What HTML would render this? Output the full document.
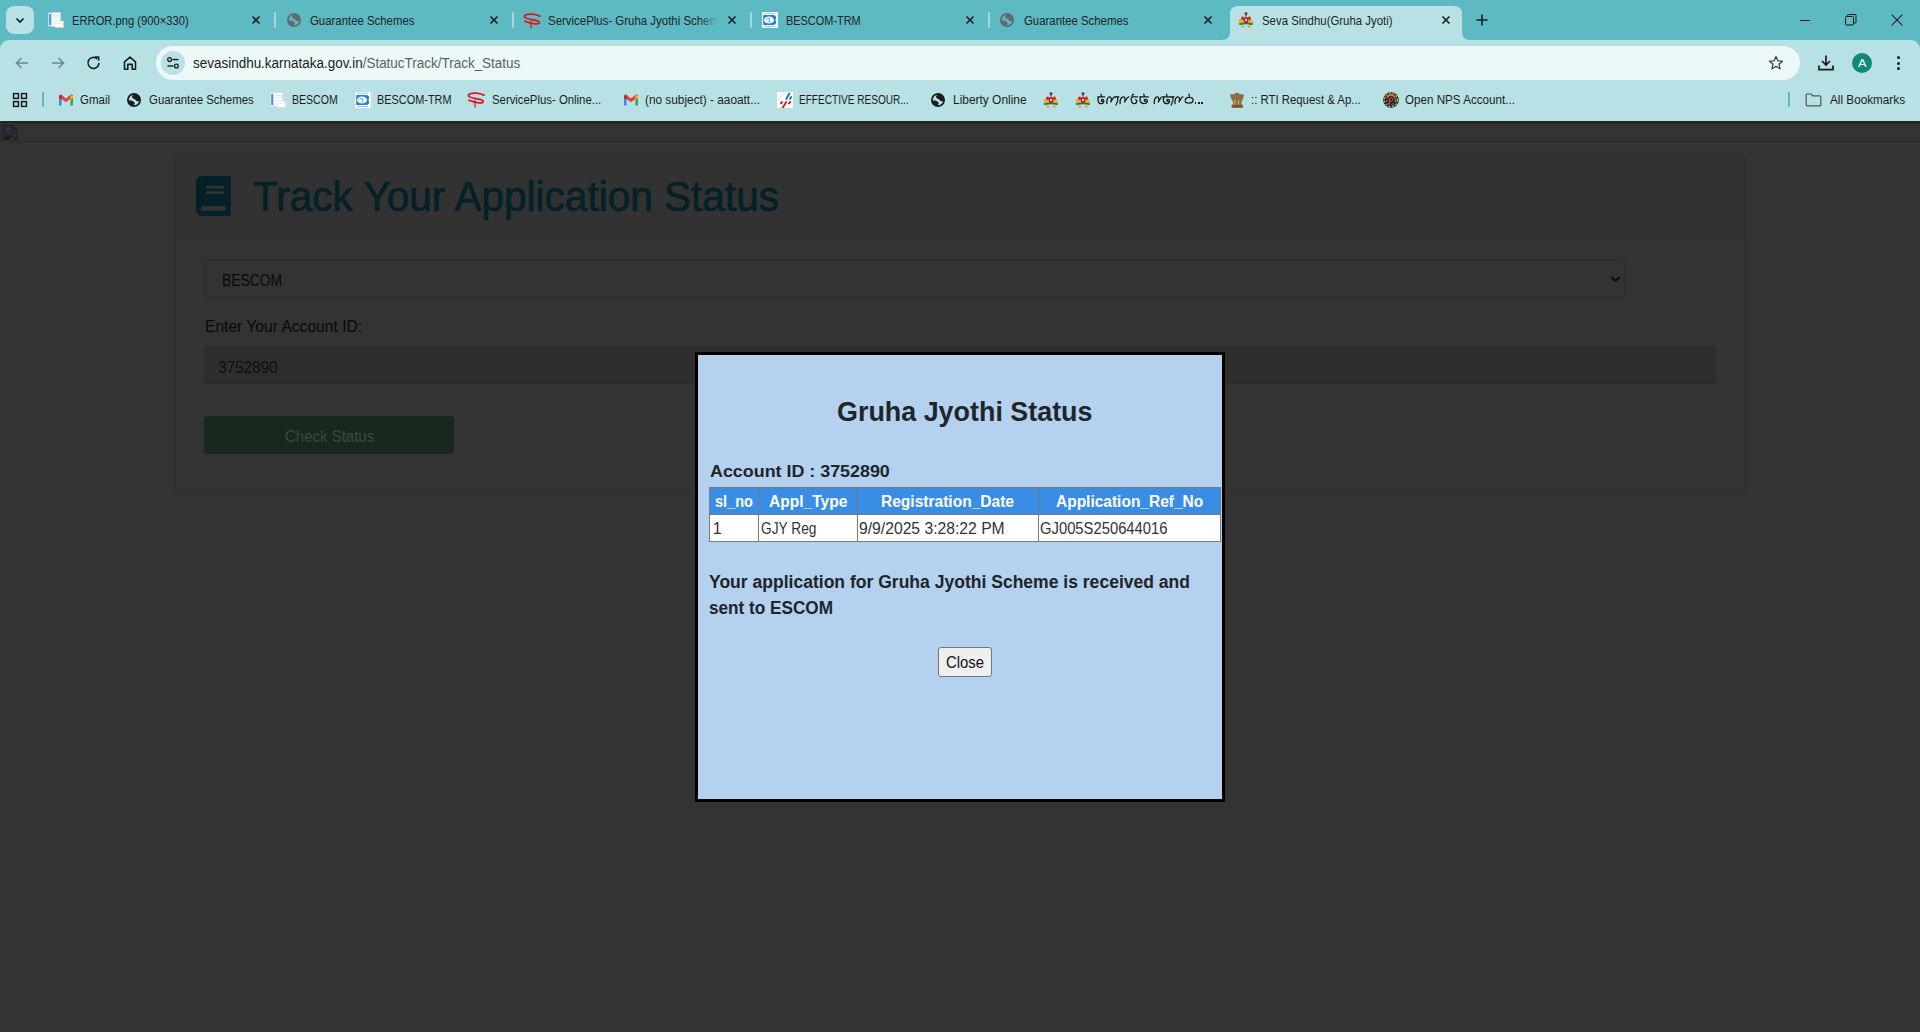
<!DOCTYPE html>
<html><head><meta charset="utf-8"><title>Seva Sindhu(Gruha Jyoti)</title><style>*{box-sizing:border-box;margin:0;padding:0}
html,body{width:1920px;height:1032px;overflow:hidden;background:#333333;font-family:"Liberation Sans",sans-serif}
.abs{position:absolute;display:block}
.t{position:absolute;white-space:nowrap}
</style></head><body>
<div class="abs" style="left:0;top:0;width:1920px;height:60px;background:#5db9c2"></div>
<div class="abs" style="left:6px;top:6px;width:28px;height:28px;border-radius:8px;background:#b8e1e5"></div>
<svg class="abs" style="left:14px;top:14px" width="12" height="12" viewBox="0 0 12 12"><path d="M2.5 4.5 L6 8 L9.5 4.5" fill="none" stroke="#1b1b1b" stroke-width="1.6"/></svg>
<svg class="abs" style="left:1222px;top:6px" width="248" height="35" viewBox="0 0 248 35"><path d="M0 34 Q8 34 8 26 L8 8 Q8 0 16 0 L232 0 Q240 0 240 8 L240 26 Q240 34 248 34 L248 35 L0 35 Z" fill="#b8e1e5"/></svg>
<div class="abs" style="left:0;top:0;width:1920px;height:60px;background:#5db9c2"></div>
<div class="abs" style="left:6px;top:6px;width:28px;height:28px;border-radius:8px;background:#b8e1e5"></div>
<svg class="abs" style="left:14px;top:14px" width="12" height="12" viewBox="0 0 12 12"><path d="M2.5 4.5 L6 8 L9.5 4.5" fill="none" stroke="#1b1b1b" stroke-width="1.6"/></svg>
<svg class="abs" style="left:1222px;top:6px" width="248" height="35" viewBox="0 0 248 35"><path d="M0 34 Q8 34 8 26 L8 8 Q8 0 16 0 L232 0 Q240 0 240 8 L240 26 Q240 34 248 34 L248 35 L0 35 Z" fill="#b8e1e5"/></svg>
<svg class="abs" style="left:48px;top:12px" width="16" height="16" viewBox="0 0 16 16"><rect x="0.5" y="1" width="9" height="13" fill="#f4f7fa" stroke="#d7dde3" stroke-width="0.6"/><rect x="1.2" y="2" width="2" height="11" fill="#4a90d9"/><rect x="4" y="0.5" width="8.5" height="14" fill="#fbfcfd" stroke="#d0d6dc" stroke-width="0.6"/><rect x="5" y="3" width="6" height="1" fill="#dfe4ea"/><rect x="5" y="5" width="6" height="1" fill="#dfe4ea"/><rect x="7" y="9" width="8.5" height="6.5" fill="#ffffff" stroke="#cfd5db" stroke-width="0.6"/><rect x="8.5" y="11" width="5" height="1" fill="#e3e7ec"/></svg>
<svg class="abs" style="left:249px;top:13px" width="14" height="14" viewBox="0 0 14 14"><path d="M3.5 3.5 L10.5 10.5 M10.5 3.5 L3.5 10.5" stroke="#1d1d1d" stroke-width="1.6" fill="none"/></svg>
<svg class="abs" style="left:286px;top:12px" width="16" height="16" viewBox="0 0 16 16"><defs><clipPath id="gc286_12"><circle cx="8" cy="8" r="5.2"/></clipPath></defs><circle cx="8" cy="8" r="7" fill="#5f6b6d"/><g clip-path="url(#gc286_12)"><path fill="#5db9c2" d="M0 0 L7.5 0 L7.5 3 C6 3.5 5.6 5.2 6.6 6 C7.6 6.8 9 7 9.8 8.2 C10.6 9.4 12 9.4 16 9 L16 16 L7.6 16 L7.6 13 C8.8 12.6 9 11 8.2 10.2 C7.4 9.4 6 8.8 5 8.6 C4 8.4 2 8.6 0 8.6 Z"/></g></svg>
<svg class="abs" style="left:487px;top:13px" width="14" height="14" viewBox="0 0 14 14"><path d="M3.5 3.5 L10.5 10.5 M10.5 3.5 L3.5 10.5" stroke="#1d1d1d" stroke-width="1.6" fill="none"/></svg>
<svg class="abs" style="left:523px;top:12.5px" width="18" height="16" viewBox="0 0 18 16"><path d="M17 3.2 C13 0.8 4 0.2 1.8 2.6 C0.4 4.4 3.5 5.6 7.5 6.4 C12.5 7.2 16.3 7.8 16.3 9.6 C16.3 11.6 10 11.6 2 8.2" fill="none" stroke="#e3121a" stroke-width="1.7" stroke-linecap="round"/><path d="M8 8 L8 15.5" stroke="#e3121a" stroke-width="1.2"/></svg>
<svg class="abs" style="left:725px;top:13px" width="14" height="14" viewBox="0 0 14 14"><path d="M3.5 3.5 L10.5 10.5 M10.5 3.5 L3.5 10.5" stroke="#1d1d1d" stroke-width="1.6" fill="none"/></svg>
<svg class="abs" style="left:762px;top:12px" width="16" height="16" viewBox="0 0 16 16"><rect x="0" y="0" width="16" height="16" fill="#ffffff"/><path d="M1.2 3 L11 3 C14.5 3 15 6.5 13.2 8 C15.2 9.5 14.5 13 11 13 L1.2 13 Z" fill="#1a84d6"/><ellipse cx="7" cy="8" rx="5" ry="3.6" fill="#ffffff"/><path d="M3.5 8 C5 6.2 7 6.2 8 7 M7.4 7 L7.4 11" stroke="#5aa8e0" stroke-width="1" fill="none"/><rect x="2" y="0.8" width="11" height="1" fill="#9cc8ee"/><rect x="2" y="14" width="11" height="1" fill="#9cc8ee"/></svg>
<svg class="abs" style="left:963px;top:13px" width="14" height="14" viewBox="0 0 14 14"><path d="M3.5 3.5 L10.5 10.5 M10.5 3.5 L3.5 10.5" stroke="#1d1d1d" stroke-width="1.6" fill="none"/></svg>
<svg class="abs" style="left:999px;top:12px" width="16" height="16" viewBox="0 0 16 16"><defs><clipPath id="gc999_12"><circle cx="8" cy="8" r="5.2"/></clipPath></defs><circle cx="8" cy="8" r="7" fill="#5f6b6d"/><g clip-path="url(#gc999_12)"><path fill="#5db9c2" d="M0 0 L7.5 0 L7.5 3 C6 3.5 5.6 5.2 6.6 6 C7.6 6.8 9 7 9.8 8.2 C10.6 9.4 12 9.4 16 9 L16 16 L7.6 16 L7.6 13 C8.8 12.6 9 11 8.2 10.2 C7.4 9.4 6 8.8 5 8.6 C4 8.4 2 8.6 0 8.6 Z"/></g></svg>
<svg class="abs" style="left:1201px;top:13px" width="14" height="14" viewBox="0 0 14 14"><path d="M3.5 3.5 L10.5 10.5 M10.5 3.5 L3.5 10.5" stroke="#1d1d1d" stroke-width="1.6" fill="none"/></svg>
<svg class="abs" style="left:1238px;top:12px" width="16" height="16" viewBox="0 0 16 16"><path d="M5.6 4 C3.6 5 2 7.6 0.8 10.6 C1.6 12 3.6 12.6 5.6 12.2 Z" fill="#ecb21e"/><path d="M10.4 4 C12.4 5 14 7.6 15.2 10.6 C14.4 12 12.4 12.6 10.4 12.2 Z" fill="#ecb21e"/><path d="M1.4 9.5 C1 8.5 1.4 7.5 2.2 7.2" stroke="#d8a020" stroke-width="0.8" fill="none"/><ellipse cx="4.6" cy="6.2" rx="1.3" ry="1.7" fill="#d40f1a"/><ellipse cx="11.4" cy="6.2" rx="1.3" ry="1.7" fill="#d40f1a"/><circle cx="8" cy="1.6" r="1.4" fill="#9a1024"/><rect x="6.9" y="3" width="2.2" height="1.6" fill="#3a8ad0"/><ellipse cx="8" cy="8.3" rx="2.4" ry="3.4" fill="#c3172e"/><ellipse cx="8" cy="8" rx="1.1" ry="1.3" fill="#ecdadf"/><path d="M0.6 11.6 Q8 9.6 15.4 11.6 L14.2 13.2 Q8 11.4 1.8 13.2 Z" fill="#2a7458"/><path d="M4 13.4 L6.4 13.4 L6 15.6 L3.2 15.6 Z M9.6 13.4 L12 13.4 L12.8 15.6 L10 15.6 Z" fill="#e6a628"/></svg>
<svg class="abs" style="left:1439px;top:13px" width="14" height="14" viewBox="0 0 14 14"><path d="M3.5 3.5 L10.5 10.5 M10.5 3.5 L3.5 10.5" stroke="#1d1d1d" stroke-width="1.6" fill="none"/></svg>
<div class="abs" style="left:274px;top:12px;width:2px;height:16px;background:#a6d8dd;border-radius:1px"></div>
<div class="abs" style="left:512px;top:12px;width:2px;height:16px;background:#a6d8dd;border-radius:1px"></div>
<div class="abs" style="left:750px;top:12px;width:2px;height:16px;background:#a6d8dd;border-radius:1px"></div>
<div class="abs" style="left:988px;top:12px;width:2px;height:16px;background:#a6d8dd;border-radius:1px"></div>
<div class="abs" style="left:700px;top:8px;width:24px;height:24px;background:linear-gradient(to right, rgba(93,185,194,0), #5db9c2 70%);z-index:5"></div>
<svg class="abs" style="left:1475px;top:13px" width="14" height="14" viewBox="0 0 14 14"><path d="M7 1.5 L7 12.5 M1.5 7 L12.5 7" stroke="#1b1b1b" stroke-width="1.6"/></svg>
<div class="abs" style="left:1800px;top:20px;width:10px;height:1px;background:#1b1b1b"></div>
<svg class="abs" style="left:1845px;top:14px" width="12" height="12" viewBox="0 0 12 12"><rect x="0.5" y="2.5" width="8" height="8.5" rx="1" fill="none" stroke="#1b1b1b" stroke-width="1"/><path d="M2.5 2.5 L2.5 1.5 Q2.5 0.5 3.5 0.5 L10 0.5 Q11 0.5 11 1.5 L11 8.5 Q11 9 10.5 9 L9 9" fill="none" stroke="#1b1b1b" stroke-width="1"/></svg>
<svg class="abs" style="left:1891px;top:14px" width="12" height="12" viewBox="0 0 12 12"><path d="M0.7 0.7 L11.3 11.3 M11.3 0.7 L0.7 11.3" stroke="#1b1b1b" stroke-width="1.1"/></svg>
<div class="abs" style="left:0;top:40px;width:1920px;height:81px;background:#b8e1e5;border-top-left-radius:9px;border-top-right-radius:9px"></div>
<svg class="abs" style="left:14px;top:55px" width="16" height="16" viewBox="0 0 16 16"><path d="M14 8 L2.5 8 M7.5 3 L2.5 8 L7.5 13" fill="none" stroke="#6f8486" stroke-width="1.5"/></svg>
<svg class="abs" style="left:50px;top:55px" width="16" height="16" viewBox="0 0 16 16"><path d="M2 8 L13.5 8 M8.5 3 L13.5 8 L8.5 13" fill="none" stroke="#6f8486" stroke-width="1.5"/></svg>
<svg class="abs" style="left:86px;top:55px" width="16" height="16" viewBox="0 0 16 16"><path d="M13 8 A5.5 5.5 0 1 1 11.2 3.8" fill="none" stroke="#1b1b1b" stroke-width="1.6"/><path d="M8.8 2 L12.6 2 L12.6 5.8" fill="none" stroke="#1b1b1b" stroke-width="1.6"/></svg>
<svg class="abs" style="left:122px;top:55px" width="16" height="16" viewBox="0 0 16 16"><path d="M2.5 14.2 L2.5 6.8 L8 2.2 L13.5 6.8 L13.5 14.2 L10.2 14.2 L10.2 9.4 L5.8 9.4 L5.8 14.2 Z" fill="none" stroke="#1b1b1b" stroke-width="1.6" stroke-linejoin="round"/></svg>
<div class="abs" style="left:156px;top:46px;width:1644px;height:34px;border-radius:17px;background:#edf8f8"></div>
<div class="abs" style="left:161px;top:51px;width:24px;height:24px;border-radius:12px;background:#b8e1e5"></div>
<svg class="abs" style="left:165px;top:55px" width="16" height="16" viewBox="0 0 16 16"><circle cx="4.6" cy="4.6" r="1.9" fill="none" stroke="#1b1b1b" stroke-width="1.3"/><path d="M7.6 4.6 L13.5 4.6" stroke="#1b1b1b" stroke-width="1.4"/><circle cx="11.4" cy="11" r="1.9" fill="none" stroke="#1b1b1b" stroke-width="1.3"/><path d="M2.5 11 L8.4 11" stroke="#1b1b1b" stroke-width="1.4"/></svg>
<svg class="abs" style="left:1768px;top:55px" width="16" height="16" viewBox="0 0 16 16"><path d="M8 1.5 L9.9 5.8 L14.5 6.2 L11 9.2 L12.1 13.8 L8 11.4 L3.9 13.8 L5 9.2 L1.5 6.2 L6.1 5.8 Z" fill="none" stroke="#444" stroke-width="1.3" stroke-linejoin="round"/></svg>
<svg class="abs" style="left:1818px;top:55px" width="16" height="16" viewBox="0 0 16 16"><path d="M8 0.5 L8 10 M4 6 L8 10 L12 6" fill="none" stroke="#1b1b1b" stroke-width="1.7"/><path d="M1 10.5 L1 14.6 L15 14.6 L15 10.5" fill="none" stroke="#1b1b1b" stroke-width="1.7"/></svg>
<div class="abs" style="left:1852px;top:53px;width:20px;height:20px;border-radius:10px;background:#0f8a7a"></div>
<div class="abs" style="left:1896.5px;top:55.8px;width:3px;height:3px;border-radius:2px;background:#1b1b1b"></div>
<div class="abs" style="left:1896.5px;top:61.5px;width:3px;height:3px;border-radius:2px;background:#1b1b1b"></div>
<div class="abs" style="left:1896.5px;top:67.2px;width:3px;height:3px;border-radius:2px;background:#1b1b1b"></div>
<svg class="abs" style="left:12px;top:92px" width="16" height="16" viewBox="0 0 16 16"><rect x="1.6" y="1.6" width="4.8" height="4.8" fill="none" stroke="#1b1b1b" stroke-width="1.5"/><rect x="9.6" y="1.6" width="4.8" height="4.8" fill="none" stroke="#1b1b1b" stroke-width="1.5"/><rect x="1.6" y="9.6" width="4.8" height="4.8" fill="none" stroke="#1b1b1b" stroke-width="1.5"/><rect x="9.6" y="9.6" width="4.8" height="4.8" fill="none" stroke="#1b1b1b" stroke-width="1.5"/></svg>
<div class="abs" style="left:42px;top:92px;width:2px;height:15px;background:#5db9c2;border-radius:1px"></div>
<div class="abs" style="left:1788px;top:92px;width:2px;height:15px;background:#5db9c2;border-radius:1px"></div>
<svg class="abs" style="left:58px;top:92px" width="16" height="16" viewBox="0 0 16 16"><path d="M1 4 L1 13.5 L3.6 13.5 L3.6 6.6 Z" fill="#4285f4"/><path d="M15 4 L15 13.5 L12.4 13.5 L12.4 6.6 Z" fill="#34a853"/><path d="M1 4 C1 2.6 2.4 2 3.4 2.8 L8 6.4 L12.6 2.8 C13.6 2 15 2.6 15 4 L15 5 L8 10.2 L1 5 Z" fill="#ea4335"/><path d="M12.4 3.2 L15 4 L15 6 L12.4 7.6 Z" fill="#fbbc04"/><path d="M1 4 L3.6 3.2 L3.6 7.6 L1 6 Z" fill="#c5221f"/></svg>
<svg class="abs" style="left:126px;top:92px" width="16" height="16" viewBox="0 0 16 16"><defs><clipPath id="gc126_92"><circle cx="8" cy="8" r="5.2"/></clipPath></defs><circle cx="8" cy="8" r="7" fill="#1b1b1b"/><g clip-path="url(#gc126_92)"><path fill="#b8e1e5" d="M0 0 L7.5 0 L7.5 3 C6 3.5 5.6 5.2 6.6 6 C7.6 6.8 9 7 9.8 8.2 C10.6 9.4 12 9.4 16 9 L16 16 L7.6 16 L7.6 13 C8.8 12.6 9 11 8.2 10.2 C7.4 9.4 6 8.8 5 8.6 C4 8.4 2 8.6 0 8.6 Z"/></g></svg>
<svg class="abs" style="left:270px;top:92px" width="16" height="16" viewBox="0 0 16 16"><rect x="0.5" y="1" width="9" height="13" fill="#f4f7fa" stroke="#d7dde3" stroke-width="0.6"/><rect x="1.2" y="2" width="2" height="11" fill="#4a90d9"/><rect x="4" y="0.5" width="8.5" height="14" fill="#fbfcfd" stroke="#d0d6dc" stroke-width="0.6"/><rect x="5" y="3" width="6" height="1" fill="#dfe4ea"/><rect x="5" y="5" width="6" height="1" fill="#dfe4ea"/><rect x="7" y="9" width="8.5" height="6.5" fill="#ffffff" stroke="#cfd5db" stroke-width="0.6"/><rect x="8.5" y="11" width="5" height="1" fill="#e3e7ec"/></svg>
<svg class="abs" style="left:355px;top:92px" width="16" height="16" viewBox="0 0 16 16"><rect x="0" y="0" width="16" height="16" fill="#ffffff"/><path d="M1.2 3 L11 3 C14.5 3 15 6.5 13.2 8 C15.2 9.5 14.5 13 11 13 L1.2 13 Z" fill="#1a84d6"/><ellipse cx="7" cy="8" rx="5" ry="3.6" fill="#ffffff"/><path d="M3.5 8 C5 6.2 7 6.2 8 7 M7.4 7 L7.4 11" stroke="#5aa8e0" stroke-width="1" fill="none"/><rect x="2" y="0.8" width="11" height="1" fill="#9cc8ee"/><rect x="2" y="14" width="11" height="1" fill="#9cc8ee"/></svg>
<svg class="abs" style="left:467px;top:92px" width="18" height="16" viewBox="0 0 18 16"><path d="M17 3.2 C13 0.8 4 0.2 1.8 2.6 C0.4 4.4 3.5 5.6 7.5 6.4 C12.5 7.2 16.3 7.8 16.3 9.6 C16.3 11.6 10 11.6 2 8.2" fill="none" stroke="#e3121a" stroke-width="1.7" stroke-linecap="round"/><path d="M8 8 L8 15.5" stroke="#e3121a" stroke-width="1.2"/></svg>
<svg class="abs" style="left:623px;top:92px" width="16" height="16" viewBox="0 0 16 16"><path d="M1 4 L1 13.5 L3.6 13.5 L3.6 6.6 Z" fill="#4285f4"/><path d="M15 4 L15 13.5 L12.4 13.5 L12.4 6.6 Z" fill="#34a853"/><path d="M1 4 C1 2.6 2.4 2 3.4 2.8 L8 6.4 L12.6 2.8 C13.6 2 15 2.6 15 4 L15 5 L8 10.2 L1 5 Z" fill="#ea4335"/><path d="M12.4 3.2 L15 4 L15 6 L12.4 7.6 Z" fill="#fbbc04"/><path d="M1 4 L3.6 3.2 L3.6 7.6 L1 6 Z" fill="#c5221f"/></svg>
<svg class="abs" style="left:777px;top:92px" width="16" height="16" viewBox="0 0 16 16"><rect x="0" y="0" width="16" height="16" fill="#ffffff"/><path d="M1.5 9 C2 4 5 1.6 9 1.4" fill="none" stroke="#d8d8d8" stroke-width="0.9"/><path d="M12.6 0.8 L9 7.6 M14.6 4.4 L12.6 7.6" stroke="#0f60b8" stroke-width="1.7"/><path d="M5.4 9.4 L3.6 12 M9.6 9.4 L5.6 16 M13.6 9.4 L11.6 12" stroke="#e01010" stroke-width="1.8"/></svg>
<svg class="abs" style="left:930px;top:92px" width="16" height="16" viewBox="0 0 16 16"><defs><clipPath id="gc930_92"><circle cx="8" cy="8" r="5.2"/></clipPath></defs><circle cx="8" cy="8" r="7" fill="#1b1b1b"/><g clip-path="url(#gc930_92)"><path fill="#b8e1e5" d="M0 0 L7.5 0 L7.5 3 C6 3.5 5.6 5.2 6.6 6 C7.6 6.8 9 7 9.8 8.2 C10.6 9.4 12 9.4 16 9 L16 16 L7.6 16 L7.6 13 C8.8 12.6 9 11 8.2 10.2 C7.4 9.4 6 8.8 5 8.6 C4 8.4 2 8.6 0 8.6 Z"/></g></svg>
<svg class="abs" style="left:1043px;top:92px" width="16" height="16" viewBox="0 0 16 16"><path d="M5.6 4 C3.6 5 2 7.6 0.8 10.6 C1.6 12 3.6 12.6 5.6 12.2 Z" fill="#ecb21e"/><path d="M10.4 4 C12.4 5 14 7.6 15.2 10.6 C14.4 12 12.4 12.6 10.4 12.2 Z" fill="#ecb21e"/><path d="M1.4 9.5 C1 8.5 1.4 7.5 2.2 7.2" stroke="#d8a020" stroke-width="0.8" fill="none"/><ellipse cx="4.6" cy="6.2" rx="1.3" ry="1.7" fill="#d40f1a"/><ellipse cx="11.4" cy="6.2" rx="1.3" ry="1.7" fill="#d40f1a"/><circle cx="8" cy="1.6" r="1.4" fill="#9a1024"/><rect x="6.9" y="3" width="2.2" height="1.6" fill="#3a8ad0"/><ellipse cx="8" cy="8.3" rx="2.4" ry="3.4" fill="#c3172e"/><ellipse cx="8" cy="8" rx="1.1" ry="1.3" fill="#ecdadf"/><path d="M0.6 11.6 Q8 9.6 15.4 11.6 L14.2 13.2 Q8 11.4 1.8 13.2 Z" fill="#2a7458"/><path d="M4 13.4 L6.4 13.4 L6 15.6 L3.2 15.6 Z M9.6 13.4 L12 13.4 L12.8 15.6 L10 15.6 Z" fill="#e6a628"/></svg>
<svg class="abs" style="left:1075px;top:92px" width="16" height="16" viewBox="0 0 16 16"><path d="M5.6 4 C3.6 5 2 7.6 0.8 10.6 C1.6 12 3.6 12.6 5.6 12.2 Z" fill="#ecb21e"/><path d="M10.4 4 C12.4 5 14 7.6 15.2 10.6 C14.4 12 12.4 12.6 10.4 12.2 Z" fill="#ecb21e"/><path d="M1.4 9.5 C1 8.5 1.4 7.5 2.2 7.2" stroke="#d8a020" stroke-width="0.8" fill="none"/><ellipse cx="4.6" cy="6.2" rx="1.3" ry="1.7" fill="#d40f1a"/><ellipse cx="11.4" cy="6.2" rx="1.3" ry="1.7" fill="#d40f1a"/><circle cx="8" cy="1.6" r="1.4" fill="#9a1024"/><rect x="6.9" y="3" width="2.2" height="1.6" fill="#3a8ad0"/><ellipse cx="8" cy="8.3" rx="2.4" ry="3.4" fill="#c3172e"/><ellipse cx="8" cy="8" rx="1.1" ry="1.3" fill="#ecdadf"/><path d="M0.6 11.6 Q8 9.6 15.4 11.6 L14.2 13.2 Q8 11.4 1.8 13.2 Z" fill="#2a7458"/><path d="M4 13.4 L6.4 13.4 L6 15.6 L3.2 15.6 Z M9.6 13.4 L12 13.4 L12.8 15.6 L10 15.6 Z" fill="#e6a628"/></svg>
<svg class="abs" style="left:1096px;top:92px" width="100" height="16" viewBox="0 0 100 16" fill="none" stroke="#1c1c1c" stroke-width="1.3" stroke-linecap="round"><path d="M1.7625 4.8 L8.7 4.8 M4.95 2.2 L5.5125 4.8 M2.7 4.8 C1.3875 7 1.7625 11.6 4.95 11.6 C8.325 11.6 8.7 7.6 6.2625 7.4 C4.95 7.4 4.95 9.4 6.45 9.4"/><path d="M10.866666666666667 11.6 C10.3 8 11.811111111111112 4.8 13.700000000000001 4.8 C15.588888888888889 4.8 15.777777777777779 8 14.644444444444446 10.4 C16.344444444444445 7.4 17.28888888888889 4.8 18.8 4.8"/><path d="M18.8 5.4 C19.8 4.6 21.2 4.6 22.8 4.8 M21.8 4.8 C22.2 8 21.2 11 20.0 13"/><path d="M24.133333333333333 11.6 C23.5 8 25.18888888888889 4.8 27.3 4.8 C29.41111111111111 4.8 29.62222222222222 8 28.355555555555554 10.4 C30.255555555555556 7.4 31.31111111111111 4.8 33.0 4.8"/><path d="M37.73076923076923 2.4 C35.57692307692308 2.6 35.57692307692308 4.8 37.73076923076923 4.8 L41.5 4.8 M36.00769230769231 4.8 C34.5 7.4 35.146153846153844 11.6 38.16153846153846 11.6 C41.176923076923075 11.6 41.607692307692304 8 39.45384615384615 7.6"/><path d="M43.7125 4.8 L52.5 4.8 M47.75 2.2 L48.4625 4.8 M44.9 4.8 C43.2375 7 43.7125 11.6 47.75 11.6 C52.025 11.6 52.5 7.6 49.4125 7.4 C47.75 7.4 47.75 9.4 49.65 9.4"/><path d="M58.36666666666667 11.6 C57.8 8 59.31111111111111 4.8 61.199999999999996 4.8 C63.08888888888889 4.8 63.27777777777777 8 62.14444444444444 10.4 C63.84444444444444 7.4 64.78888888888889 4.8 66.3 4.8"/><path d="M67.1 4.8 L74.5 4.8 M70.5 2.2 L71.1 4.8 M68.1 4.8 C66.7 7 67.1 11.6 70.5 11.6 C74.1 11.6 74.5 7.6 71.9 7.4 C70.5 7.4 70.5 9.4 72.1 9.4"/><path d="M74.5 5.4 C75.5 4.6 76.9 4.6 78.0 4.8 M77.0 4.8 C77.4 8 76.4 11 75.2 13"/><path d="M79.06666666666666 11.6 C78.5 8 80.0111111111111 4.8 81.9 4.8 C83.78888888888889 4.8 83.97777777777777 8 82.84444444444445 10.4 C84.54444444444445 7.4 85.4888888888889 4.8 87.0 4.8"/><path d="M92.94666666666667 2.2 L93.36 4.8 M89.22666666666667 8 C89.22666666666667 4.6 97.08000000000001 4.6 97.08000000000001 8.2 C97.08000000000001 11.8 89.22666666666667 11.8 89.22666666666667 9.2"/></svg><div class="abs" style="left:1194.6px;top:102.4px;width:1.8px;height:1.8px;background:#1c1c1c"></div><div class="abs" style="left:1197.8px;top:102.4px;width:1.8px;height:1.8px;background:#1c1c1c"></div><div class="abs" style="left:1201px;top:102.4px;width:1.8px;height:1.8px;background:#1c1c1c"></div>
<svg class="abs" style="left:1229px;top:92px" width="16" height="16" viewBox="0 0 16 16"><path d="M1 3.5 C2 1.5 4 2 5 2.5 C6 0 10 0 11 2.5 C12 2 14 1.5 15 3.5 L13.5 8 L12.5 10 L12.5 12.5 L14 13 L14 16 L2.5 16 L2.5 13 L4 12.5 L4 10 L3 8 Z" fill="#8f6b40"/><path d="M6 8 L6 12.5 M9.5 8 L9.5 12.5" stroke="#d9c29a" stroke-width="0.9"/><path d="M3 14 L13 14" stroke="#5e4324" stroke-width="1"/></svg>
<svg class="abs" style="left:1383px;top:92px" width="16" height="16" viewBox="0 0 16 16"><circle cx="8" cy="8" r="7.8" fill="#1a1a1a"/><circle cx="8" cy="8" r="6.6" fill="none" stroke="#e8c21a" stroke-width="1.2" stroke-dasharray="2 1.6"/><circle cx="8" cy="8" r="6.6" fill="none" stroke="#7a3aa8" stroke-width="1.2" stroke-dasharray="1.2 2.4" stroke-dashoffset="1"/><circle cx="8" cy="8" r="4.4" fill="none" stroke="#2a8ad8" stroke-width="1.4" stroke-dasharray="2.6 1.2"/><path d="M4 5.5 A4.4 4.4 0 0 1 12 5.5" fill="none" stroke="#f08020" stroke-width="1.4"/><path d="M12.4 6 A4.4 4.4 0 0 1 12.4 10" fill="none" stroke="#40a830" stroke-width="1.4"/><circle cx="8" cy="7.6" r="1.8" fill="none" stroke="#e83a10" stroke-width="1.3"/><path d="M6.5 7.6 L6.5 12" stroke="#e83a10" stroke-width="1.3"/></svg>
<svg class="abs" style="left:1805px;top:92px" width="17" height="16" viewBox="0 0 17 16"><path d="M1.2 3 Q1.2 2 2.2 2 L6.2 2 L7.8 3.8 L14.8 3.8 Q15.8 3.8 15.8 4.8 L15.8 12.8 Q15.8 13.8 14.8 13.8 L2.2 13.8 Q1.2 13.8 1.2 12.8 Z" fill="none" stroke="#555" stroke-width="1.2"/></svg>
<div class="abs" style="left:0;top:121px;width:1920px;height:911px;background:#333333"></div>
<div class="abs" style="left:0;top:121px;width:1920px;height:2px;background:#232323"></div>
<div class="abs" style="left:0;top:123px;width:1920px;height:19px;border-left:1px solid #2b2b2b;border-bottom:1px solid #2a2a2a;border-top:1px solid #2f2f2f"></div>
<svg class="abs" style="left:2px;top:124px" width="16" height="16" viewBox="0 0 16 16"><path d="M1 1 L10.5 1 L15 5.5 L15 15.5 L1 15.5 Z" fill="#262b33" stroke="#1e1e1e" stroke-width="1"/><path d="M10.5 1 L10.5 5.5 L15 5.5" fill="none" stroke="#1e1e1e" stroke-width="1.2"/><ellipse cx="6" cy="4.8" rx="2.2" ry="1.1" fill="#3a3d40"/><path d="M1.5 15.5 C3 11 7.5 10.2 11 12.5 L8.6 15.5 Z" fill="#102510"/><path d="M12 15.5 L14.5 12.5 L14.5 15.5 Z" fill="#102510"/><path d="M8 16.5 L16 8" stroke="#333" stroke-width="1.5"/></svg>
<div class="abs" style="left:175px;top:157px;width:1571px;height:334px;border:1px solid #2e2e2e;background:#333333"></div>
<div class="abs" style="left:176px;top:158px;width:1569px;height:81px;background:#323232"></div>
<div class="abs" style="left:176px;top:239px;width:1569px;height:1px;background:#2e2e2e"></div>
<svg class="abs" style="left:196px;top:176px" width="36" height="40" viewBox="0 0 36 40"><path d="M7 0 L35 0 L35 40 L7 40 Q0 40 0 33 L0 7 Q0 0 7 0 Z" fill="#042127"/><rect x="10" y="10" width="18" height="2.6" rx="0.6" fill="#333"/><rect x="10" y="15.2" width="18" height="2.6" rx="0.6" fill="#333"/><path d="M7.4 30.2 L29.7 30.2 L29.7 34.8 L7.4 34.8 Q5 34.8 5 32.5 Q5 30.2 7.4 30.2 Z" fill="#333"/><ellipse cx="35.8" cy="32.5" rx="1.4" ry="2.2" fill="#333"/></svg>
<div class="abs" style="left:204px;top:260px;width:1421px;height:38px;border:1px solid #2c2c2c;border-radius:4px;background:#333"></div>
<svg class="abs" style="left:1609px;top:273px" width="13" height="12" viewBox="0 0 13 12"><path d="M2.5 4 L6.5 8 L10.5 4" fill="none" stroke="#0b0b0b" stroke-width="1.8"/></svg>
<div class="abs" style="left:204px;top:346px;width:1512px;height:38px;border:1px solid #2c2c2c;border-radius:4px;background:#2e2e2e"></div>
<div class="abs" style="left:204px;top:416px;width:250px;height:38px;border-radius:4px;background:#19281d"></div>
<div class="abs" style="left:695px;top:352px;width:530px;height:450px;border:3px solid #000;background:#b4d1ef"></div>
<div class="abs" style="left:709px;top:487px;width:512px;height:55px;border:1px solid #7a7a7a;background:#ffffff"></div>
<div class="abs" style="left:710px;top:488px;width:510px;height:26px;background:#3a8de4"></div>
<div class="abs" style="left:710px;top:514px;width:510px;height:1px;background:#7a7a7a"></div>
<div class="abs" style="left:758px;top:488px;width:1px;height:53px;background:#7a7a7a"></div>
<div class="abs" style="left:857px;top:488px;width:1px;height:53px;background:#7a7a7a"></div>
<div class="abs" style="left:1038px;top:488px;width:1px;height:53px;background:#7a7a7a"></div>
<div class="abs" style="left:938px;top:647px;width:54px;height:30px;border:1px solid #767676;border-radius:3px;background:#efefef"></div>
<div class="t" id="t0" style="left:72.0px;top:14.64px;font-size:12px;line-height:12px;color:#1c2526;font-weight:400;transform:scaleX(0.9330);transform-origin:0 0;">ERROR.png (900×330)</div>
<div class="t" id="t1" style="left:310.0px;top:14.64px;font-size:12px;line-height:12px;color:#1c2526;font-weight:400;transform:scaleX(0.9486);transform-origin:0 0;">Guarantee Schemes</div>
<div class="t" id="t2" style="left:548.0px;top:14.64px;font-size:12px;line-height:12px;color:#1c2526;font-weight:400;transform:scaleX(0.9531);transform-origin:0 0;">ServicePlus- Gruha Jyothi Schem</div>
<div class="t" id="t3" style="left:786.0px;top:14.64px;font-size:12px;line-height:12px;color:#1c2526;font-weight:400;transform:scaleX(0.9110);transform-origin:0 0;">BESCOM-TRM</div>
<div class="t" id="t4" style="left:1024.0px;top:14.64px;font-size:12px;line-height:12px;color:#1c2526;font-weight:400;transform:scaleX(0.9486);transform-origin:0 0;">Guarantee Schemes</div>
<div class="t" id="t5" style="left:1262.0px;top:14.64px;font-size:12px;line-height:12px;color:#1c2526;font-weight:400;transform:scaleX(0.9497);transform-origin:0 0;">Seva Sindhu(Gruha Jyoti)</div>
<div class="t" id="t6" style="left:192.7px;top:56.35px;font-size:14px;line-height:14px;color:#1c1c1c;font-weight:400;transform:scaleX(0.9617);transform-origin:0 0;">sevasindhu.karnataka.gov.in<span style="color:#5a6364">/StatucTrack/Track_Status</span></div>
<div class="t" id="t7" style="left:1857.5px;top:58.19px;font-size:11px;line-height:11px;color:#ffffff;font-weight:400;transform:scaleX(1.1574);transform-origin:0 0;">A</div>
<div class="t" id="t8" style="left:80.0px;top:93.84px;font-size:12px;line-height:12px;color:#1c1c1c;font-weight:400;transform:scaleX(0.9571);transform-origin:0 0;">Gmail</div>
<div class="t" id="t9" style="left:149.0px;top:93.84px;font-size:12px;line-height:12px;color:#1c1c1c;font-weight:400;transform:scaleX(0.9522);transform-origin:0 0;">Guarantee Schemes</div>
<div class="t" id="t10" style="left:292.0px;top:93.84px;font-size:12px;line-height:12px;color:#1c1c1c;font-weight:400;transform:scaleX(0.8786);transform-origin:0 0;">BESCOM</div>
<div class="t" id="t11" style="left:377.3px;top:93.84px;font-size:12px;line-height:12px;color:#1c1c1c;font-weight:400;transform:scaleX(0.9085);transform-origin:0 0;">BESCOM-TRM</div>
<div class="t" id="t12" style="left:491.6px;top:93.84px;font-size:12px;line-height:12px;color:#1c1c1c;font-weight:400;transform:scaleX(0.9464);transform-origin:0 0;">ServicePlus- Online...</div>
<div class="t" id="t13" style="left:645.0px;top:93.84px;font-size:12px;line-height:12px;color:#1c1c1c;font-weight:400;transform:scaleX(0.9851);transform-origin:0 0;">(no subject) - aaoatt...</div>
<div class="t" id="t14" style="left:799.3px;top:93.84px;font-size:12px;line-height:12px;color:#1c1c1c;font-weight:400;transform:scaleX(0.8394);transform-origin:0 0;">EFFECTIVE RESOUR...</div>
<div class="t" id="t15" style="left:953.0px;top:93.84px;font-size:12px;line-height:12px;color:#1c1c1c;font-weight:400;transform:scaleX(0.9940);transform-origin:0 0;">Liberty Online</div>
<div class="t" id="t16" style="left:1250.8px;top:93.84px;font-size:12px;line-height:12px;color:#1c1c1c;font-weight:400;transform:scaleX(0.9470);transform-origin:0 0;">:: RTI Request &amp; Ap...</div>
<div class="t" id="t17" style="left:1404.7px;top:93.84px;font-size:12px;line-height:12px;color:#1c1c1c;font-weight:400;transform:scaleX(0.9691);transform-origin:0 0;">Open NPS Account...</div>
<div class="t" id="t18" style="left:1830.0px;top:93.84px;font-size:12px;line-height:12px;color:#1c1c1c;font-weight:400;transform:scaleX(0.9780);transform-origin:0 0;">All Bookmarks</div>
<div class="t" id="t19" style="left:252.8px;top:176.09px;font-size:41.6px;line-height:41.6px;color:#042127;font-weight:400;transform:scaleX(0.9750);transform-origin:0 0;-webkit-text-stroke:0.7px #042127;">Track Your Application Status</div>
<div class="t" id="t20" style="left:221.6px;top:273.46px;font-size:16px;line-height:16px;color:#08090a;font-weight:400;transform:scaleX(0.8667);transform-origin:0 0;">BESCOM</div>
<div class="t" id="t21" style="left:204.7px;top:319.46px;font-size:16px;line-height:16px;color:#08090a;font-weight:400;transform:scaleX(0.9758);transform-origin:0 0;">Enter Your Account ID:</div>
<div class="t" id="t22" style="left:217.6px;top:359.66px;font-size:16px;line-height:16px;color:#0e0f10;font-weight:400;transform:scaleX(0.9567);transform-origin:0 0;">3752890</div>
<div class="t" id="t23" style="left:284.6px;top:428.66px;font-size:16px;line-height:16px;color:#3b4a40;font-weight:400;transform:scaleX(0.9374);transform-origin:0 0;">Check Status</div>
<div class="t" id="t24" style="left:837.4px;top:398.30px;font-size:28px;line-height:28px;color:#212529;font-weight:700;transform:scaleX(0.9604);transform-origin:0 0;">Gruha Jyothi Status</div>
<div class="t" id="t25" style="left:709.5px;top:463.21px;font-size:17px;line-height:17px;color:#212529;font-weight:700;transform:scaleX(1.0514);transform-origin:0 0;">Account ID : 3752890</div>
<div class="t" id="t26" style="left:715.0px;top:493.66px;font-size:16px;line-height:16px;color:#ffffff;font-weight:700;transform:scaleX(0.9092);transform-origin:0 0;">sl_no</div>
<div class="t" id="t27" style="left:768.9px;top:493.66px;font-size:16px;line-height:16px;color:#ffffff;font-weight:700;transform:scaleX(0.9714);transform-origin:0 0;">Appl_Type</div>
<div class="t" id="t28" style="left:881.2px;top:493.66px;font-size:16px;line-height:16px;color:#ffffff;font-weight:700;transform:scaleX(0.9714);transform-origin:0 0;">Registration_Date</div>
<div class="t" id="t29" style="left:1055.8px;top:493.66px;font-size:16px;line-height:16px;color:#ffffff;font-weight:700;transform:scaleX(0.9683);transform-origin:0 0;">Application_Ref_No</div>
<div class="t" id="t30" style="left:712.7px;top:521.36px;font-size:16px;line-height:16px;color:#333333;font-weight:400;">1</div>
<div class="t" id="t31" style="left:760.7px;top:521.36px;font-size:16px;line-height:16px;color:#333333;font-weight:400;transform:scaleX(0.8588);transform-origin:0 0;">GJY Reg</div>
<div class="t" id="t32" style="left:858.7px;top:521.36px;font-size:16px;line-height:16px;color:#333333;font-weight:400;transform:scaleX(0.9807);transform-origin:0 0;">9/9/2025 3:28:22 PM</div>
<div class="t" id="t33" style="left:1040.3px;top:521.36px;font-size:16px;line-height:16px;color:#333333;font-weight:400;transform:scaleX(0.9245);transform-origin:0 0;">GJ005S250644016</div>
<div class="t" id="t34" style="left:709.4px;top:572.66px;font-size:18px;line-height:18px;color:#212529;font-weight:700;transform:scaleX(0.9741);transform-origin:0 0;">Your application for Gruha Jyothi Scheme is received and</div>
<div class="t" id="t35" style="left:709.4px;top:599.46px;font-size:18px;line-height:18px;color:#212529;font-weight:700;transform:scaleX(0.9537);transform-origin:0 0;">sent to ESCOM</div>
<div class="t" id="t36" style="left:945.9px;top:655.46px;font-size:16px;line-height:16px;color:#111111;font-weight:400;transform:scaleX(0.9290);transform-origin:0 0;">Close</div>
</body></html>
